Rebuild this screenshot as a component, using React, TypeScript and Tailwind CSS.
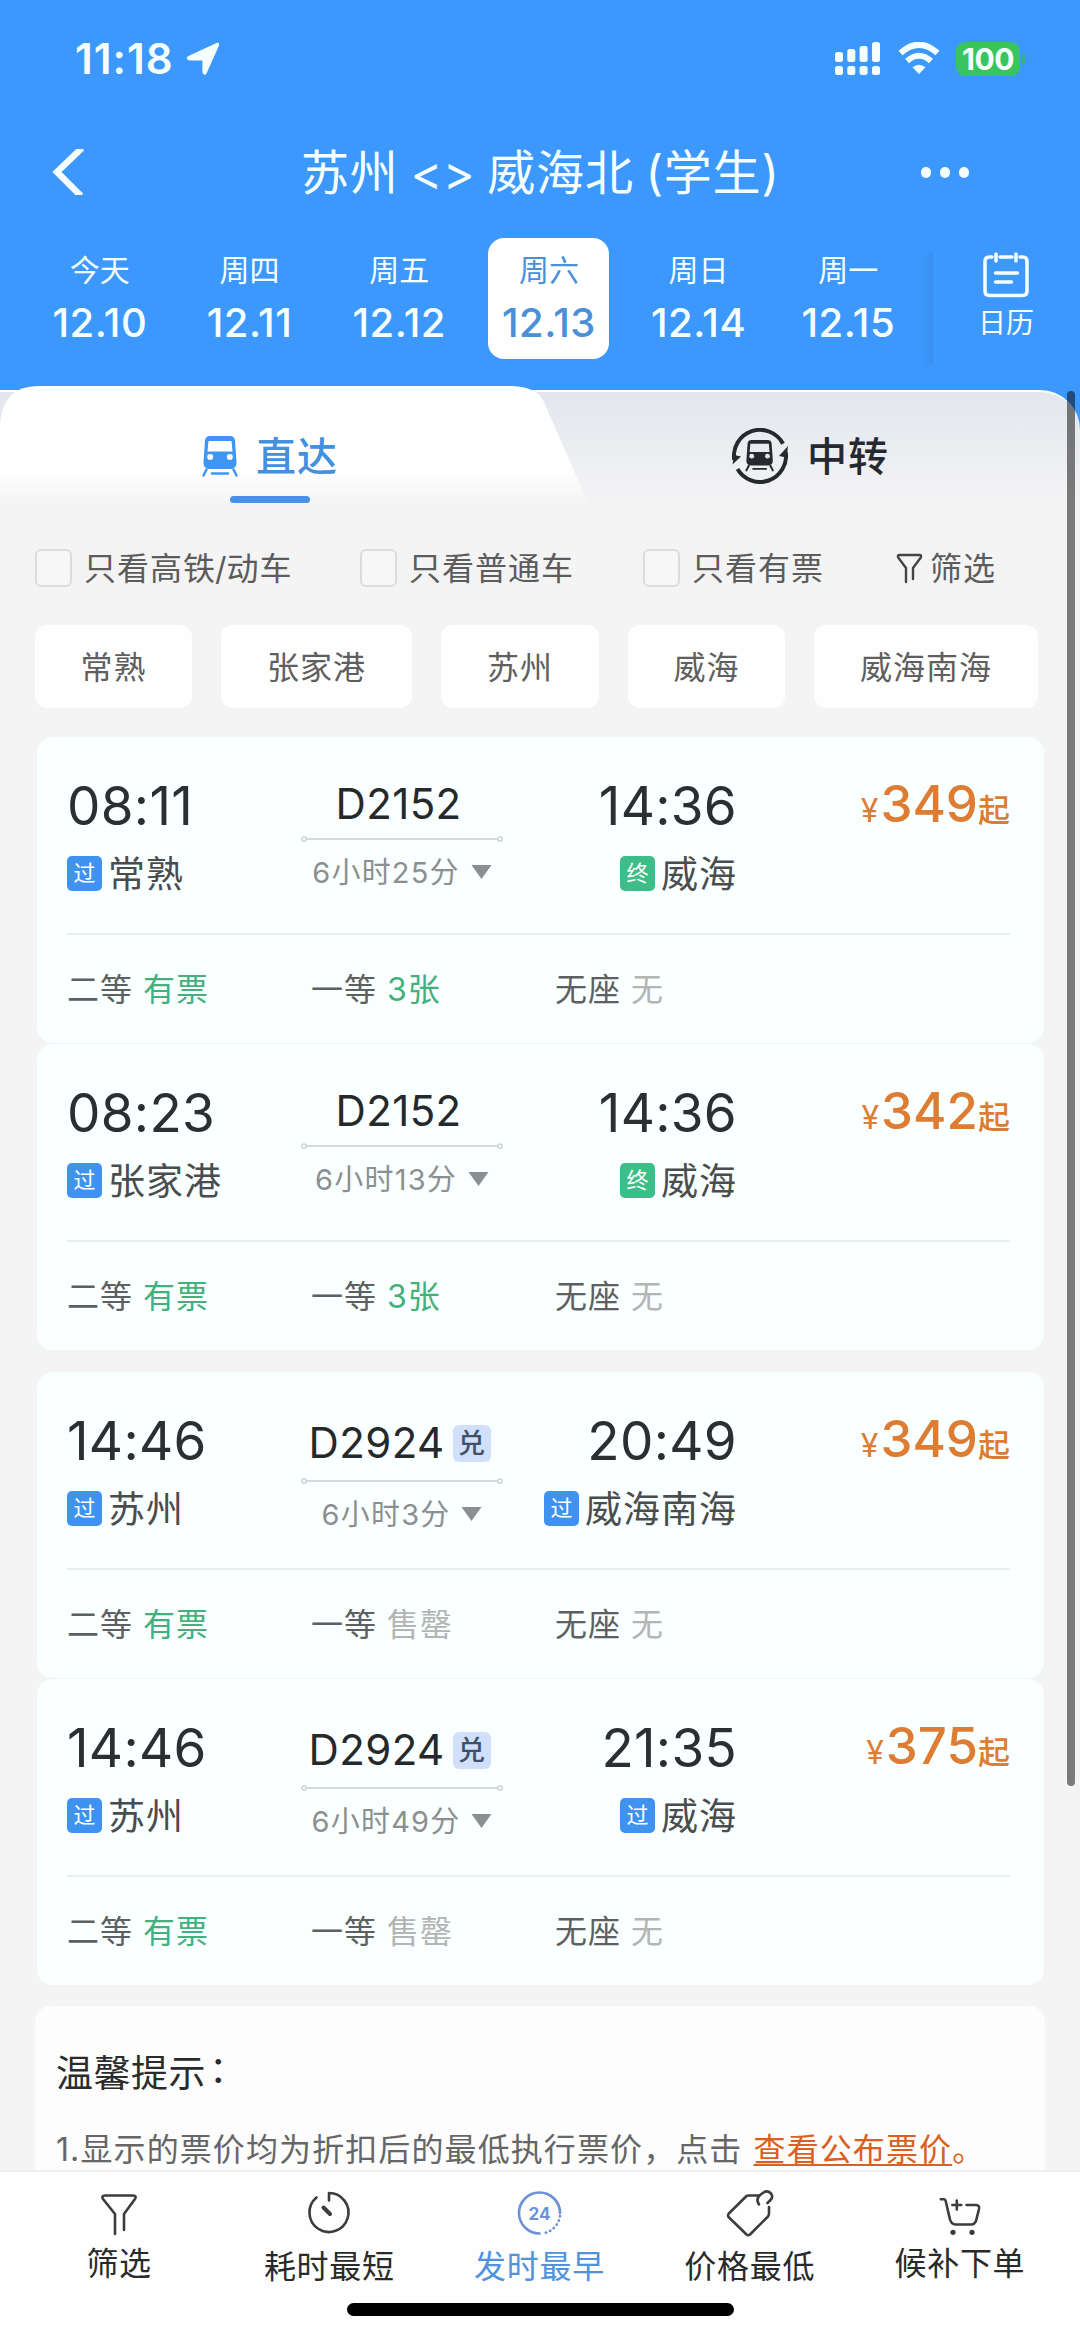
import React from 'react';

interface Stop {
  time: string;
  station: string;
  kind: 'pass' | 'end';
}

interface Train {
  code: string;
  exchange?: boolean;
  duration: string;
  from: Stop;
  to: Stop;
  price: string;
  firstClass: string;
}

const days = [
  { label: '今天', date: '12.10' },
  { label: '周四', date: '12.11' },
  { label: '周五', date: '12.12' },
  { label: '周六', date: '12.13', active: true },
  { label: '周日', date: '12.14' },
  { label: '周一', date: '12.15' },
];

const stations = [
  { name: '常熟', width: 'w-[157px]' },
  { name: '张家港', width: 'w-[191px]' },
  { name: '苏州', width: 'w-[158px]' },
  { name: '威海', width: 'w-[157px]' },
  { name: '威海南海', width: 'w-[224px]' },
];

const groups: Train[][] = [
  [
    {
      code: 'D2152',
      duration: '6小时25分',
      from: { time: '08:11', station: '常熟', kind: 'pass' },
      to: { time: '14:36', station: '威海', kind: 'end' },
      price: '349',
      firstClass: '3张',
    },
    {
      code: 'D2152',
      duration: '6小时13分',
      from: { time: '08:23', station: '张家港', kind: 'pass' },
      to: { time: '14:36', station: '威海', kind: 'end' },
      price: '342',
      firstClass: '3张',
    },
  ],
  [
    {
      code: 'D2924',
      exchange: true,
      duration: '6小时3分',
      from: { time: '14:46', station: '苏州', kind: 'pass' },
      to: { time: '20:49', station: '威海南海', kind: 'pass' },
      price: '349',
      firstClass: '售罄',
    },
    {
      code: 'D2924',
      exchange: true,
      duration: '6小时49分',
      from: { time: '14:46', station: '苏州', kind: 'pass' },
      to: { time: '21:35', station: '威海', kind: 'pass' },
      price: '375',
      firstClass: '售罄',
    },
  ],
];

const StatusBar: React.FC = () => (
  <div className="flex h-[118px] items-center pl-[75px] pr-[55px]">
    <span className="text-[42px] font-semibold leading-none tracking-[1px]">11:18</span>
    <svg className="ml-[12px] h-[34px] w-[34px]" viewBox="0 0 34 34" fill="currentColor">
      <path d="M30.5 1 Q34 0 33 3.500 L20.500 31.500 Q19 34 17 31.500 Q16.400 31 16.400 29 V18.400 H5 Q0.500 18.400 0.800 16 Q1 14.600 3 13.700Z" />
    </svg>
    <div className="ml-auto flex items-center">
      <svg className="h-[34px] w-[46px]" viewBox="0 0 46 34" fill="currentColor">
        <rect x="0" y="10" width="8" height="10" rx="2.500" />
        <rect x="12.300" y="7" width="8" height="13" rx="2.500" />
        <rect x="24.600" y="4" width="8" height="16" rx="2.500" />
        <rect x="37" y="0" width="8" height="20" rx="2.500" />
        <rect x="0" y="24" width="8" height="9" rx="2.500" />
        <rect x="12.300" y="24" width="8" height="9" rx="2.500" />
        <rect x="24.600" y="24" width="8" height="9" rx="2.500" />
        <rect x="37" y="24" width="8" height="9" rx="2.500" />
      </svg>
      <svg className="ml-[17px] h-[34px] w-[42px]" viewBox="0 0 42 34" fill="none" stroke="currentColor" strokeWidth="6">
        <path d="M2.500 11 Q21 -5.500 39.500 11" />
        <path d="M9 19 Q21 8.500 33 19" />
        <path d="M21 32 L14.500 25.300 Q21 20 27.500 25.300Z" fill="currentColor" stroke="none" />
      </svg>
      <div className="ml-[16px] flex h-[34px] w-[64px] items-center justify-center rounded-[9px] bg-[#3ac45f]">
        <span className="text-[30px] font-bold leading-none tracking-[-0.5px]">100</span>
      </div>
      <div className="ml-[2px] h-[10px] w-[3px] rounded-r-full bg-[#38ae8c]"></div>
    </div>
  </div>
);

const CalendarIcon: React.FC = () => (
  <svg className="h-[46px] w-[46px]" viewBox="0 0 46 46" fill="none" stroke="currentColor" strokeWidth="3.500" strokeLinecap="round">
    <path d="M9 5 H6.500 Q2 5 2 9.500 V39 Q2 43.500 6.500 43.500 H39.500 Q44 43.500 44 39 V9.500 Q44 5 39.500 5 H37 M17 5 H29" />
    <path d="M13 2 V9 M33 2 V9" />
    <path d="M12.500 21 H34.500 M12.500 30 H28.500" />
  </svg>
);

const Header: React.FC = () => (
  <header className="flex h-[386px] shrink-0 flex-col bg-[#3c98fc] text-[#f5ffff]">
    <StatusBar />
    <div className="flex h-[108px] items-center px-[51px]">
      <svg className="h-[46px] w-[33px]" viewBox="0 0 33 46" fill="none" stroke="currentColor" strokeWidth="6.500">
        <path d="M31 -1 L6 23 L30 47" />
      </svg>
      <h1 className="ml-[217px] w-[480px] whitespace-nowrap pt-[2px] text-[48px] leading-none tracking-[0.800px] [word-spacing:-2.500px]">苏州 &lt;&gt; 威海北 (学生)</h1>
      <div className="ml-auto mr-[60px] flex gap-[9px]">
        <i className="h-[11px] w-[10px] rounded-full bg-current"></i>
        <i className="h-[11px] w-[10px] rounded-full bg-current"></i>
        <i className="h-[11px] w-[10px] rounded-full bg-current"></i>
      </div>
    </div>
    <nav className="mt-[12px] flex h-[121px] pl-[25px]">
      {days.map((day) => (
        <div key={day.date} className="flex w-[149.700px] justify-center">
          <div className={`flex w-[121px] flex-col items-center rounded-[16px] pt-[16px] ${day.active ? 'bg-white text-[#4a90d9]' : ''}`}>
            <span className="text-[30px] leading-[32px]">{day.label}</span>
            <span className="mt-[16px] text-[40px] font-medium leading-[42px] tracking-[0.500px]">{day.date}</span>
          </div>
        </div>
      ))}
      <div className="mt-[15px] h-[112px] w-[10px] bg-gradient-to-l from-[#3a8ff0] to-[#3c98fc]"></div>
      <div className="ml-[38px] flex w-[70px] flex-col items-center pt-[14px]">
        <CalendarIcon />
        <span className="mt-[10px] text-[28px] leading-[30px]">日历</span>
      </div>
    </nav>
  </header>
);

const TrainGlyph: React.FC<{ window: string }> = ({ window }) => (
  <>
    <path d="M8 0 H28 Q32.500 0 33 4.500 L34.500 26 Q34.800 33 28.500 33 H7.500 Q1.200 33 1.500 26 L3 4.500 Q3.500 0 8 0Z" fill="currentColor" />
    <path d="M6.500 5 H29.500 L30.500 15.500 H5.500Z" fill={window} />
    <circle cx="8.200" cy="21" r="3" fill={window} />
    <circle cx="27.800" cy="21" r="3" fill={window} />
    <path d="M4.500 33.500 L1.500 39.500 M31.500 33.500 L34.500 39.500 M10 37.500 H26" stroke="currentColor" strokeWidth="2.500" strokeLinecap="round" />
  </>
);

const Tabs: React.FC = () => (
  <div className="relative h-[134px] bg-gradient-to-b from-[#3c98fc] from-[40%] to-[#f4f4f5] to-[40%]">
    <div className="absolute inset-x-0 bottom-0 top-[4px] rounded-tr-[40px] border-t-2 border-white bg-gradient-to-b from-[#e3e6ed] to-[#f4f4f5] to-[88%]"></div>
    <div className="absolute inset-0 bg-gradient-to-b from-white from-[60%] to-[#f4f4f5] to-[90%] [clip-path:path('M0_134_V40_Q2_0_38_0_H512_Q536_1_543_14_L586_112_L590_134_Z')]"></div>
    <div className="relative flex h-full">
      <div className="flex w-[540px] flex-col items-center pt-[50px] text-[#438fe0]">
        <div className="flex h-[41px] items-center">
          <svg className="h-[41px] w-[36px] text-[#3f95f3]" viewBox="0 0 36 41">
            <TrainGlyph window="#ffffff" />
          </svg>
          <span className="ml-[18px] pt-[1px] text-[40px] font-medium leading-none tracking-[1px]">直达</span>
        </div>
        <div className="mt-[19px] h-[7px] w-[80px] rounded-full bg-[#4791e6]"></div>
      </div>
      <div className="mt-[42px] flex h-[56px] w-[540px] items-center pl-[192px] text-[#26292d]">
        <svg className="h-[56px] w-[56px]" viewBox="0 0 56 56" fill="none">
          <path d="M2.300 32 A26 26 0 0 1 51 15.800" stroke="currentColor" strokeWidth="4" />
          <path d="M53.700 24 A26 26 0 0 1 5.500 41" stroke="currentColor" strokeWidth="4" />
          <path d="M0.500 36.500 L9 28.500 L2 27Z M56 18 L47 28 L54.500 29.500Z" fill="currentColor" />
          <g transform="translate(13.200 12) scale(0.800 0.770)">
            <TrainGlyph window="#e8ebf1" />
          </g>
        </svg>
        <span className="ml-[19px] pt-[2px] text-[40px] font-medium leading-none tracking-[1px]">中转</span>
      </div>
    </div>
  </div>
);

const Check: React.FC<{ children: React.ReactNode }> = ({ children }) => (
  <label className="flex items-center gap-[12px]">
    <span className="h-[38px] w-[37px] rounded-[6px] border-2 border-[#dcdcdc] bg-[#f7f7f7]"></span>
    <span className="pt-[2px]">{children}</span>
  </label>
);

const Filters: React.FC = () => (
  <div className="mt-[29px] flex h-[38px] items-center whitespace-nowrap pl-[35px] text-[32px] leading-none tracking-[1px] text-[#5c5c5c]">
    <div className="w-[325px]">
      <Check>只看高铁<span className="-mx-[1px]">/</span>动车</Check>
    </div>
    <div className="w-[283px]"><Check>只看普通车</Check></div>
    <div className="w-[253px]"><Check>只看有票</Check></div>
    <svg className="h-[31px] w-[27px]" viewBox="0 0 27 31" fill="none" stroke="#444444" strokeWidth="2.400" strokeLinecap="round" strokeLinejoin="round">
      <path d="M10 29 V15 L2.200 4.500 Q1.200 2 3.500 2 H23.500 Q25.800 2 24.800 4.500 L17 15 V26" />
    </svg>
    <span className="ml-[7px] pt-[2px]">筛选</span>
  </div>
);

const Badge: React.FC<{ kind: Stop['kind'] }> = ({ kind }) => (
  <span className={`flex h-[35px] w-[35px] items-center justify-center rounded-[5px] text-[22px] leading-none text-white ${kind === 'end' ? 'bg-[#3dbd87]' : 'bg-[#3f92f0]'}`}>
    {kind === 'end' ? '终' : '过'}
  </span>
);

const StopCell: React.FC<{ stop: Stop; right?: boolean }> = ({ stop, right }) => (
  <div className={`flex flex-col pt-[42px] ${right ? 'w-[234px] items-end' : 'w-[234px] items-start'}`}>
    <span className="text-[53px] leading-[54px] tracking-[0.300px] text-[#2c2f31]">{stop.time}</span>
    <div className="mt-[22px] flex h-[36px] items-center gap-[6px]">
      <Badge kind={stop.kind} />
      <span className="whitespace-nowrap pt-[2px] text-[37px] leading-none tracking-[1px] text-[#4a4d4e]">{stop.station}</span>
    </div>
  </div>
);

const Seat: React.FC<{ name: string; value: string }> = ({ name, value }) => (
  <div className="flex w-[244px] gap-[10px]">
    <span className="text-[#5d6061]">{name}</span>
    <span className={value === '无' || value === '售罄' ? 'text-[#b3b5b5]' : 'text-[#45b07b]'}>{value}</span>
  </div>
);

const TrainCard: React.FC<{ train: Train }> = ({ train }) => (
  <article className="h-[306px] rounded-[16px] bg-[#faffff] pl-[30px] pr-[34px]">
    <div className="flex h-[198px] border-b-2 border-[#eaeded]">
      <StopCell stop={train.from} />
      <div className={`flex w-[202px] flex-col items-center ${train.exchange ? 'pt-[50px]' : 'pt-[46px]'}`}>
        <div className={`flex h-[42px] items-center gap-[8px] ${train.exchange ? '-ml-[5px]' : '-ml-[7px]'}`}>
          <span className="text-[42px] leading-none tracking-[0.400px] text-[#26292a]">{train.code}</span>
          {train.exchange && (
            <span className="flex h-[37px] w-[38px] items-center justify-center rounded-[6px] bg-[#d0e0fa] text-[27px] font-medium leading-none text-[#40506b]">兑</span>
          )}
        </div>
        <svg className={`h-[6px] w-[202px] ${train.exchange ? 'mt-[14px]' : 'mt-[11px]'}`} viewBox="0 0 202 6" fill="none" stroke="#c9cccc" strokeWidth="1.300">
          <circle cx="3" cy="3" r="2.200" />
          <path d="M5.500 3 H196.500" />
          <circle cx="199" cy="3" r="2.200" />
        </svg>
        <div className="mt-[15px] flex h-[30px] items-center gap-[11px] text-[#8b8f90]">
          <span className="whitespace-nowrap text-[29px] leading-none tracking-[1.200px]">{train.duration}</span>
          <svg className="h-[14px] w-[21px]" viewBox="0 0 21 14" fill="currentColor">
            <path d="M0.500 0 H20.500 L10.500 14Z" />
          </svg>
        </div>
      </div>
      <StopCell stop={train.to} right />
      <div className="flex flex-1 items-baseline justify-end pt-[42px] text-[#dd7d33]">
        <span className="text-[32px] leading-none">¥</span>
        <span className="ml-[2px] text-[51px] font-medium leading-[50px]">{train.price}</span>
        <span className="text-[32px] font-medium leading-none">起</span>
      </div>
    </div>
    <div className="flex h-[108px] items-center pt-[2px] text-[32px] leading-none tracking-[1px]">
      <Seat name="二等" value="有票" />
      <Seat name="一等" value={train.firstClass} />
      <Seat name="无座" value="无" />
    </div>
  </article>
);

const Tips: React.FC = () => (
  <section className="ml-[35px] mr-[35px] mt-[21px] h-[300px] rounded-[16px] bg-[#fdfdfd] pl-[21px] pt-[49px]">
    <h2 className="text-[37px] leading-[38px] tracking-[0.500px] text-[#2b2b2b]">
      温馨提示<span className="inline-block translate-x-[3px] -translate-y-[4px]">：</span>
    </h2>
    <p className="mt-[40px] whitespace-nowrap text-[32px] leading-[34px] tracking-[1.100px] text-[#666666]">
      1.显示的票价均为折扣后的最低执行票价，点击{' '}
      <span className="ml-px text-[#d9601f]">
        <span className="underline decoration-2 underline-offset-[3px]">查看公布票价</span>。
      </span>
    </p>
  </section>
);

const footerItems = [
  {
    label: '筛选',
    icon: <path d="M19 43 V23 L7 8 Q5 4.500 9 4.500 H37 Q41 4.500 39 8 L28 23 V39" />,
  },
  {
    label: '耗时最短',
    icon: (
      <>
        <path d="M10.500 6.500 A19.500 19.500 0 1 0 23 2 V9.500" />
        <path d="M17.500 16.500 L24 23" strokeWidth="4" />
      </>
    ),
  },
  {
    label: '发时最早',
    active: true,
    icon: (
      <>
        <path d="M44 22 A20.500 20.500 0 1 0 23.500 42.500" />
        <path d="M44 25 A20.500 20.500 0 0 1 26 42.500" strokeDasharray="0.500 4" />
        <text x="23.500" y="28.500" textAnchor="middle" fontSize="17" fontWeight="700" fill="currentColor" stroke="none">24</text>
      </>
    ),
  },
  {
    label: '价格最低',
    icon: (
      <>
        <path d="M33 4.500 H22.500 Q21 4.500 20 5.500 L2.800 22.500 Q1.300 24.500 2.800 26.300 L20.500 43.500 Q22.300 45 24 43.500 L41.500 26 Q43 24.500 43 22.500 V16" />
        <path d="M33 13.500 Q29.500 8 34 4 L37.500 1.500 Q41.500 -1 45 2.500 Q47.500 6 44.500 9 L41.500 12" />
      </>
    ),
  },
  {
    label: '候补下单',
    icon: (
      <>
        <path d="M4.800 8.300 H8 Q9.300 8.300 9.700 10 L14 28.500 Q15.500 33.500 19.500 33.500 H35 Q38.500 33.500 40 30 L43 18 Q43.800 14 40 14 H30.500" />
        <path d="M20.800 9.500 V18.500 M16.300 14 H25.300" />
        <circle cx="17" cy="41.300" r="2.600" fill="currentColor" stroke="none" />
        <circle cx="36" cy="41.300" r="2.600" fill="currentColor" stroke="none" />
      </>
    ),
  },
];

const Footer: React.FC = () => (
  <footer className="relative flex h-[167px] shrink-0 flex-col items-center border-t-2 border-[#efefef] bg-[#fefefe]">
    <div className="flex w-full pl-[14px] pr-[15px]">
      {footerItems.map((item, i) => (
        <div key={item.label} className={`flex flex-1 flex-col items-center ${item.active ? 'text-[#4f93dd]' : 'text-[#2a2a2a]'}`}>
          <svg
            className={`mt-[19px] h-[46px] w-[47px] overflow-visible ${item.active ? 'text-[#6c92d6]' : 'text-[#3c3c3c]'}`}
            viewBox="0 0 47 46"
            fill="none"
            stroke="currentColor"
            strokeWidth="2.600"
            strokeLinecap="round"
            strokeLinejoin="round"
          >
            {item.icon}
          </svg>
          <span className={`text-[32px] leading-[34px] tracking-[0.700px] ${i === 0 || i === 4 ? 'mt-[10px]' : 'mt-[13px]'}`}>{item.label}</span>
        </div>
      ))}
    </div>
    <div className="absolute bottom-[21px] h-[13px] w-[387px] rounded-full bg-black"></div>
  </footer>
);

const App: React.FC = () => {
  return (
    <div className="relative flex h-[2337px] w-[1080px] flex-col overflow-hidden bg-[#f4f4f5] font-[Inter,'Noto_Sans_CJK_SC',sans-serif]">
      <Header />
      <main className="min-h-0 flex-1 overflow-hidden">
        <Tabs />
        <Filters />
        <div className="mt-[38px] flex gap-[29px] pl-[35px]">
          {stations.map((s) => (
            <button key={s.name} className={`h-[83px] rounded-[12px] bg-[#fefefe] pt-[2px] text-[32px] leading-none tracking-[1px] text-[#5f5f5f] ${s.width}`}>
              {s.name}
            </button>
          ))}
        </div>
        <div className="ml-[37px] mr-[36px] mt-[29px] flex flex-col gap-[22px]">
          {groups.map((group, i) => (
            <div key={i} className="flex flex-col gap-px">
              {group.map((train, j) => (
                <TrainCard key={j} train={train} />
              ))}
            </div>
          ))}
        </div>
        <Tips />
      </main>
      <Footer />
      <div className="absolute right-[5px] top-[391px] h-[1395px] w-[8px] rounded-full bg-black/50"></div>
    </div>
  );
};

export default App;
